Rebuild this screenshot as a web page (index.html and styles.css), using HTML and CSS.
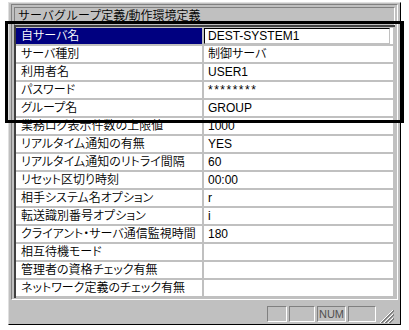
FILE: index.html
```html
<!DOCTYPE html>
<html lang="ja">
<head>
    <meta charset="UTF-8">
    <title>サーバグループ定義/動作環境定義</title>
    <link rel="stylesheet" href="styles.css">
</head>
<body>
    <div class="window">
        <div class="frame">
            <div class="caption">サーバグループ定義/動作環境定義</div>
            <div class="grid">
                <div class="cell selected">自サーバ名</div>
                <div class="cell val editing"><span class="edit">DEST-SYSTEM1</span></div>
                <div class="cell">サーバ種別</div>
                <div class="cell val">制御サーバ</div>
                <div class="cell">利用者名</div>
                <div class="cell val">USER1</div>
                <div class="cell">パスワード</div>
                <div class="cell val secret">********</div>
                <div class="cell">グループ名</div>
                <div class="cell val">GROUP</div>
                <div class="cell">業務ログ表示件数の上限値</div>
                <div class="cell val">1000</div>
                <div class="cell">リアルタイム通知の有無</div>
                <div class="cell val">YES</div>
                <div class="cell">リアルタイム通知のリトライ間隔</div>
                <div class="cell val">60</div>
                <div class="cell">リセット区切り時刻</div>
                <div class="cell val">00:00</div>
                <div class="cell">相手システム名オプション</div>
                <div class="cell val">r</div>
                <div class="cell">転送識別番号オプション</div>
                <div class="cell val">i</div>
                <div class="cell">クライアント・サーバ通信監視時間</div>
                <div class="cell val">180</div>
                <div class="cell">相互待機モード</div>
                <div class="cell val"></div>
                <div class="cell">管理者の資格チェック有無</div>
                <div class="cell val"></div>
                <div class="cell">ネットワーク定義のチェック有無</div>
                <div class="cell val"></div>
            </div>
        </div>
        <div class="statusbar">
            <span class="pane p1"></span>
            <span class="pane p2"></span>
            <span class="pane p3">NUM</span>
            <span class="pane p4"></span>
            <svg class="grip" width="14" height="13" viewBox="0 0 14 13" shape-rendering="crispEdges">
                <path d="M13 0 L0 13 M13 4 L4 13 M13 8 L8 13" stroke="#fff" fill="none"/>
                <path d="M14 0 L1 13 M14 1 L2 13 M14 4 L5 13 M14 5 L6 13 M14 8 L9 13 M14 9 L10 13" stroke="#808080" fill="none"/>
            </svg>
        </div>
    </div>

    <div class="callout"></div>
</body>
</html>
```

FILE: styles.css
```css
body {
    margin: 0;
    width: 409px;
    height: 330px;
    overflow: hidden;
    position: relative;
    background: #fff;
    color: #000;
    font-family: "Liberation Sans", "Noto Sans CJK JP", sans-serif;
    font-size: 12px;
    font-weight: 350;
}

.window {
    box-sizing: border-box;
    width: 393px;
    height: 323px;
    margin: 2px 0 0 8px;
    padding: 1px 2px 0 2px;
    background: #c0c0c0;
    border-top: 1px solid #dfdfdf;
    border-left: 1px solid #dfdfdf;
    border-right: 1px solid #000;
    border-bottom: 1px solid #000;
    display: flex;
    flex-direction: column;
}

.frame {
    border: 1px solid;
    border-color: #808080 #fff #fff #808080;
    padding: 2px 2px 1px 2px;
}

.caption {
    box-sizing: border-box;
    height: 18px;
    padding-left: 3px;
    line-height: 16px;
    white-space: nowrap;
    border-top: 1px solid #808080;
    border-left: 1px solid #808080;
    border-right: 1px solid #fff;
}

.grid {
    display: grid;
    grid-template-columns: 186px 1fr;
    grid-auto-rows: 16px;
    gap: 2px;
    padding: 1px 2px 2px 0;
    background: #c0c0c0;
    border-top: 2px solid #404040;
    border-left: 2px solid #404040;
}

.cell {
    background: #fff;
    padding-left: 5px;
    line-height: 16px;
    white-space: nowrap;
    overflow: hidden;
    font-feature-settings: "palt";
}

.cell.val {
    padding-left: 4px;
}

.cell.secret {
    letter-spacing: 1.5px;
}

.cell.selected {
    background: #000080;
    color: #fff;
}

.cell.editing {
    padding: 0 3px 0 0;
}

.edit {
    display: block;
    box-sizing: border-box;
    height: 16px;
    padding-left: 3px;
    line-height: 14px;
    border: 1px solid;
    border-color: #000 #c0c0c0 #c0c0c0 #000;
}

.statusbar {
    flex: 1;
    display: flex;
    justify-content: flex-end;
    align-items: flex-start;
    gap: 2px;
    padding: 6px 4px 0 0;
}

.pane {
    box-sizing: border-box;
    height: 16px;
    border: 1px solid;
    border-color: #808080 #fff #fff #808080;
    font-size: 11px;
    line-height: 14px;
    text-align: center;
    color: #505050;
}

.p1 { width: 20px; }
.p2 { width: 26px; }
.p3 { width: 29px; }
.p4 { width: 28px; }

.grip {
    margin: 4px 0 0 2px;
}

.callout {
    position: absolute;
    left: 5px;
    top: 21px;
    width: 399px;
    height: 102px;
    box-sizing: border-box;
    border: 3px solid #000;
    pointer-events: none;
}
```
